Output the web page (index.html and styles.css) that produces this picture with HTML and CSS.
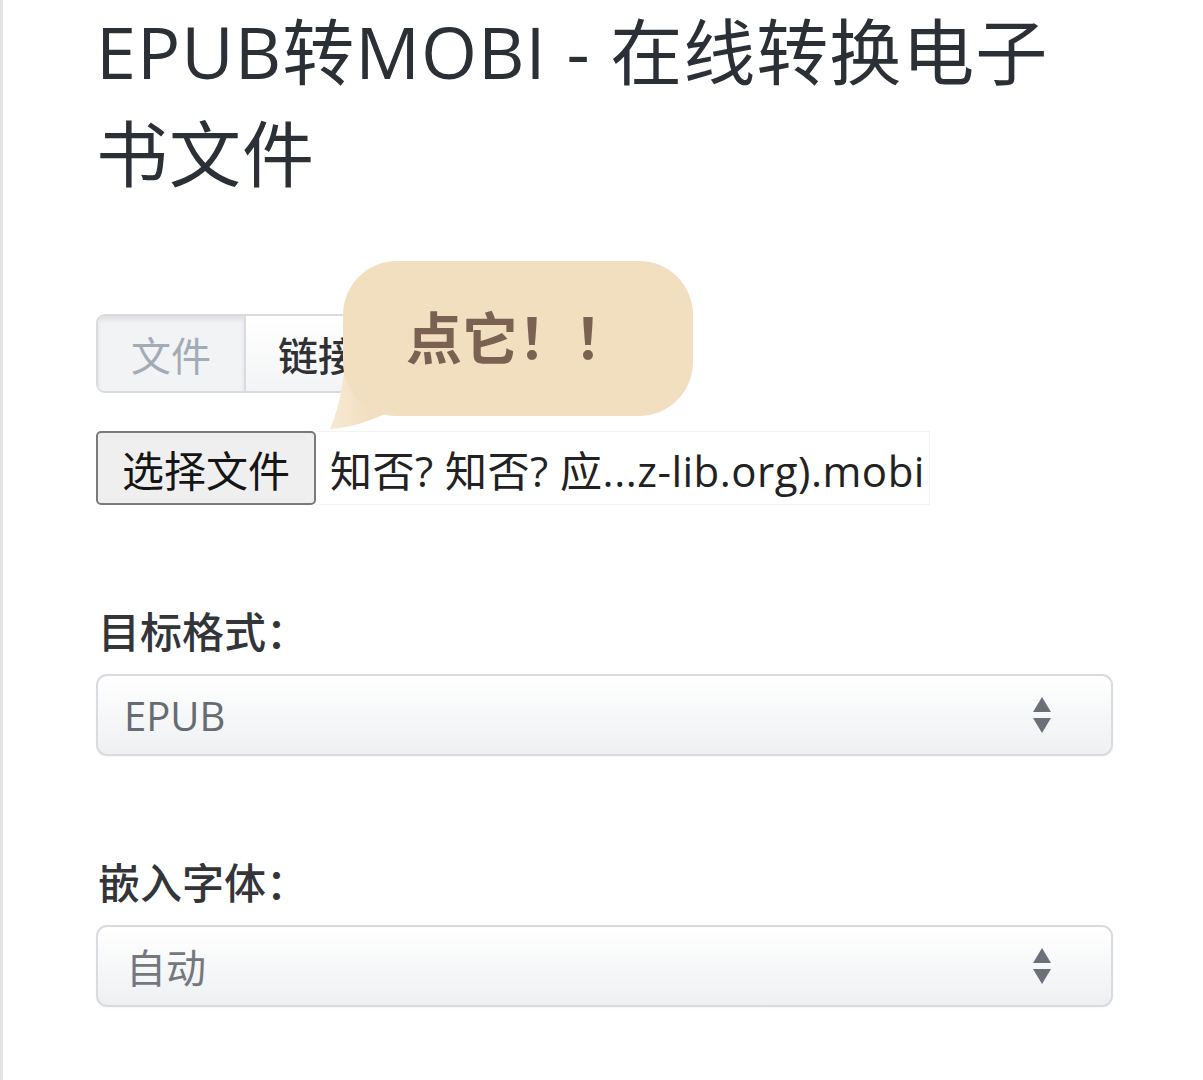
FILE: index.html
```html
<!DOCTYPE html>
<html lang="zh-CN">
<head>
<meta charset="utf-8">
<title>EPUB转MOBI</title>
<link rel="stylesheet" href="styles.css">
</head>
<body>
<div class="page">
  <h1 class="title">EPUB转MOBI - 在线转换电子书文件</h1>

  <div class="tabs-row">
    <div class="tabs">
      <div class="tab tab-active">文件</div>
      <div class="tab tab-link">链接</div>
    </div>
    <div class="bubble">
      <svg class="bubble-tail" width="70" height="90" viewBox="0 0 70 90">
        <defs>
          <linearGradient id="tg" x1="0" y1="0" x2="1" y2="0">
            <stop offset="0" stop-color="#f6ead6"/>
            <stop offset="0.6" stop-color="#f1dfc0"/>
          </linearGradient>
        </defs>
        <path d="M16 0 C14 35 8 62 0 80 C20 79 40 72 62 62 L62 0 Z" fill="url(#tg)"/>
      </svg>
      <div class="bubble-body">点它！！</div>
    </div>
  </div>

  <div class="file-row">
    <div class="file-btn">选择文件</div>
    <div class="file-name">知否? 知否? 应...z-lib.org).mobi</div>
  </div>

  <div class="field">
    <div class="label">目标格式：</div>
    <div class="select">
      <span class="select-text">EPUB</span>
      <span class="arrows"><span class="arr-up"></span><span class="arr-down"></span></span>
    </div>
  </div>

  <div class="field">
    <div class="label">嵌入字体：</div>
    <div class="select">
      <span class="select-text select-cjk">自动</span>
      <span class="arrows"><span class="arr-up"></span><span class="arr-down"></span></span>
    </div>
  </div>
</div>
</body>
</html>
```

FILE: styles.css
```css
html, body {
  margin: 0;
  padding: 0;
  background: #ffffff;
}

body {
  font-family: "Open Sans", "Noto Sans CJK SC", sans-serif;
  color: #2d3139;
}

.page {
  border-left: 3px solid #e4e4e4;
  min-height: 1080px;
  box-sizing: border-box;
  padding: 0 90px 0 93px;
}

.title {
  margin: 0;
  max-width: 1000px;
  font-size: 72px;
  line-height: 102px;
  font-weight: 400;
  letter-spacing: 1px;
  color: #2b2f36;
}

.tabs-row {
  position: relative;
  margin-top: 110px;
  height: 79px;
}

.tabs {
  display: flex;
  width: 310px;
  height: 79px;
  box-sizing: border-box;
  border: 2px solid #d9dbde;
  border-radius: 9px;
  overflow: hidden;
}

.tab {
  display: flex;
  align-items: center;
  box-sizing: border-box;
  font-size: 40px;
  font-family: "Noto Sans CJK SC", sans-serif;
}

.tab-active {
  width: 148px;
  justify-content: center;
  background: #f1f3f5;
  color: #a3abb6;
  box-shadow: inset 0 4px 4px rgba(0, 0, 0, 0.08);
  border-right: 2px solid #d9dbde;
}

.tab-link {
  flex: 1;
  padding-left: 32px;
  background: linear-gradient(#ffffff, #f3f4f5);
  color: #2f3135;
  font-weight: 500;
}

.bubble {
  position: absolute;
  left: 247px;
  top: -53px;
  width: 350px;
  height: 155px;
}

.bubble-tail {
  position: absolute;
  left: -13px;
  top: 88px;
}

.bubble-body {
  position: relative;
  height: 100%;
  border-radius: 54px;
  background: #f1dfc0;
  display: flex;
  align-items: center;
  justify-content: center;
  padding-bottom: 8px;
  box-sizing: border-box;
  font-family: "Noto Sans CJK SC", sans-serif;
  font-size: 56px;
  font-weight: 700;
  color: #7a6151;
}

.file-row {
  display: flex;
  align-items: stretch;
  margin-top: 38px;
  height: 74px;
}

.file-btn {
  display: flex;
  align-items: center;
  box-sizing: border-box;
  padding: 0 24px;
  background: #efefef;
  border: 2px solid #7a7a7a;
  border-radius: 5px;
  font-family: "Noto Sans CJK SC", sans-serif;
  font-size: 42px;
  color: #151515;
}

.file-name {
  display: flex;
  align-items: center;
  padding: 0 4px 0 14px;
  border: 1px solid #f3f3f3;
  border-left: none;
  font-size: 42px;
  letter-spacing: 0.5px;
  color: #222222;
  white-space: nowrap;
}

.field {
  margin-top: 100px;
}

.label {
  font-family: "Noto Sans CJK SC", sans-serif;
  font-size: 42px;
  line-height: 50px;
  font-weight: 500;
  color: #333539;
  padding-left: 2px;
}

.select {
  margin-top: 19px;
  height: 82px;
  box-sizing: border-box;
  border: 2px solid #d8dbdf;
  border-radius: 11px;
  background: linear-gradient(#ffffff, #eef0f2);
  box-shadow: 0 1px 2px rgba(0, 0, 0, 0.04);
  display: flex;
  align-items: center;
  justify-content: space-between;
  padding: 0 60px 0 26px;
}

.select-text {
  font-size: 40px;
  color: #676c73;
}

.select-cjk {
  font-family: "Noto Sans CJK SC", sans-serif;
  color: #74787e;
  padding-left: 2px;
}

.arrows {
  display: flex;
  flex-direction: column;
  align-items: center;
  gap: 6px;
}

.arr-up {
  width: 0;
  height: 0;
  border-left: 9px solid transparent;
  border-right: 9px solid transparent;
  border-bottom: 15px solid #6b7079;
}

.arr-down {
  width: 0;
  height: 0;
  border-left: 9px solid transparent;
  border-right: 9px solid transparent;
  border-top: 15px solid #6b7079;
}
```
